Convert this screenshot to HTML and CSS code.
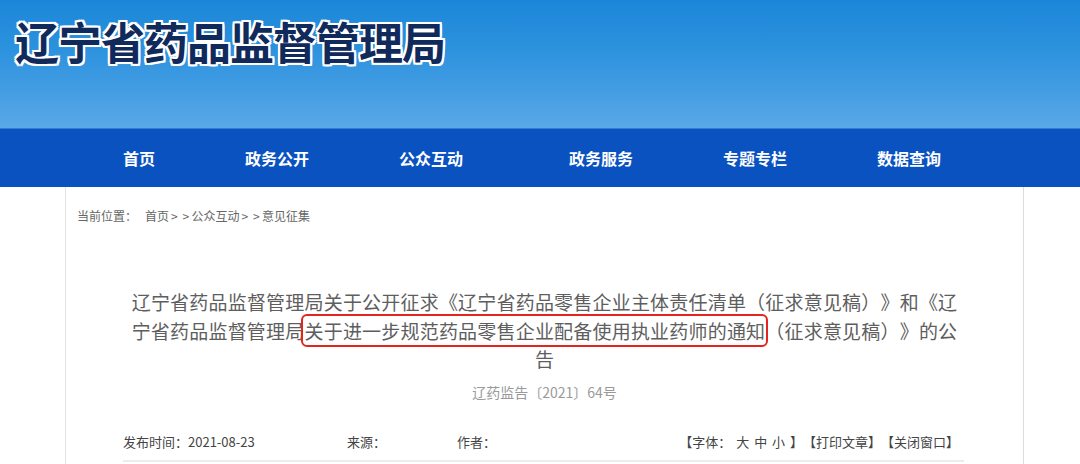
FILE: index.html
```html
<!DOCTYPE html>
<html lang="zh-CN">
<head>
<meta charset="utf-8">
<title>辽宁省药品监督管理局</title>
<link rel="stylesheet" href="styles.css">
</head>
<body>
<header class="banner">
  <div class="site-title">辽宁省药品监督管理局</div>
</header>
<div class="banner-line"></div>
<nav class="main-nav">
  <ul class="nav-list">
    <li class="nav-item">首页</li>
    <li class="nav-item">政务公开</li>
    <li class="nav-item">公众互动</li>
    <li class="nav-item nav-item-wide">政务服务</li>
    <li class="nav-item">专题专栏</li>
    <li class="nav-item">数据查询</li>
  </ul>
</nav>
<main class="content">
  <div class="breadcrumb">
    <span class="crumb-label">当前位置：</span><span class="crumb-path">首页<span class="sep">&gt; &gt;</span>公众互动<span class="sep">&gt; &gt;</span>意见征集</span>
  </div>
  <h1 class="article-title">辽宁省药品监督管理局关于公开征求《辽宁省药品零售企业主体责任清单（征求意见稿）》和《辽宁省药品监督管理局<span class="mark">关于进一步规范药品零售企业配备使用执业药师的通知</span>（征求意见稿）》的公告</h1>
  <div class="doc-number">辽药监告〔2021〕64号</div>
  <div class="meta">
    <div class="meta-left">
      <span class="meta-date">发布时间：2021-08-23</span>
      <span class="meta-source">来源：</span>
      <span class="meta-author">作者：</span>
    </div>
    <div class="meta-tools">【字体：&nbsp;大&nbsp;中&nbsp;小&nbsp;】【打印文章】【关闭窗口】</div>
  </div>
</main>
</body>
</html>
```

FILE: styles.css
```css
* { box-sizing: border-box; }
html, body {
  margin: 0;
  padding: 0;
  background: #ffffff;
  font-family: "Noto Sans CJK SC", "Noto Sans", sans-serif;
  text-spacing-trim: space-all;
  overflow: hidden;
}
.banner {
  height: 128px;
  background: linear-gradient(180deg, #1b86d9 0%, #2a91dd 35%, #3f9be2 65%, #5aa8e7 100%);
  padding: 19px 0 0 15px;
}
.site-title {
  font-size: 44px;
  line-height: 44px;
  font-weight: 700;
  letter-spacing: -1px;
  color: #102a5c;
  text-shadow:
    2px 0 0 #fff, -2px 0 0 #fff, 0 2px 0 #fff, 0 -2px 0 #fff,
    2px 2px 0 #fff, -2px -2px 0 #fff, 2px -2px 0 #fff, -2px 2px 0 #fff,
    0 0 3px #fff;
}
.banner-line {
  height: 1px;
  background: #2f7ed8;
}
.main-nav {
  height: 58px;
  background: #0b52c1;
}
.nav-list {
  list-style: none;
  margin: 0;
  padding: 0 0 0 123px;
  display: flex;
  align-items: center;
  height: 100%;
  gap: 90px;
}
.nav-item {
  color: #ffffff;
  font-size: 16px;
  font-weight: 700;
  line-height: 20px;
}
.nav-item-wide { margin-left: 16px; }
.content {
  margin-left: 65px;
  width: 959px;
  height: 300px;
  border-left: 1px solid #e3e3e3;
  border-right: 1px solid #dcdcdc;
}
.breadcrumb {
  padding: 21px 0 0 11px;
  font-size: 12px;
  line-height: 16px;
  color: #666;
}
.crumb-label { margin-right: 8px; }
.sep { margin: 0 2px; word-spacing: 1px; letter-spacing: 0.5px; }
.article-title {
  margin: 64px auto 0;
  width: 836px;
  font-size: 19px;
  letter-spacing: 0.2px;
  line-height: 28.5px;
  font-weight: 400;
  color: #5e5e5e;
  text-align: center;
}
.mark {
  outline: 2px solid #e3261d;
  outline-offset: 1px;
  border-radius: 3px;
}
.doc-number {
  margin-top: 8px;
  text-align: center;
  font-size: 14px;
  line-height: 20px;
  color: #9a9a9a;
}
.meta {
  margin: 30px 59px 0 57px;
  display: flex;
  justify-content: space-between;
  align-items: center;
  padding-bottom: 8px;
  border-bottom: 2px solid #ececec;
  font-size: 13px;
  line-height: 20px;
  color: #444;
}
.meta-left { display: flex; }
.meta-date { width: 224px; }
.meta-source { width: 110px; }
.meta-tools { padding-right: 5px; word-spacing: 2px; }
```
